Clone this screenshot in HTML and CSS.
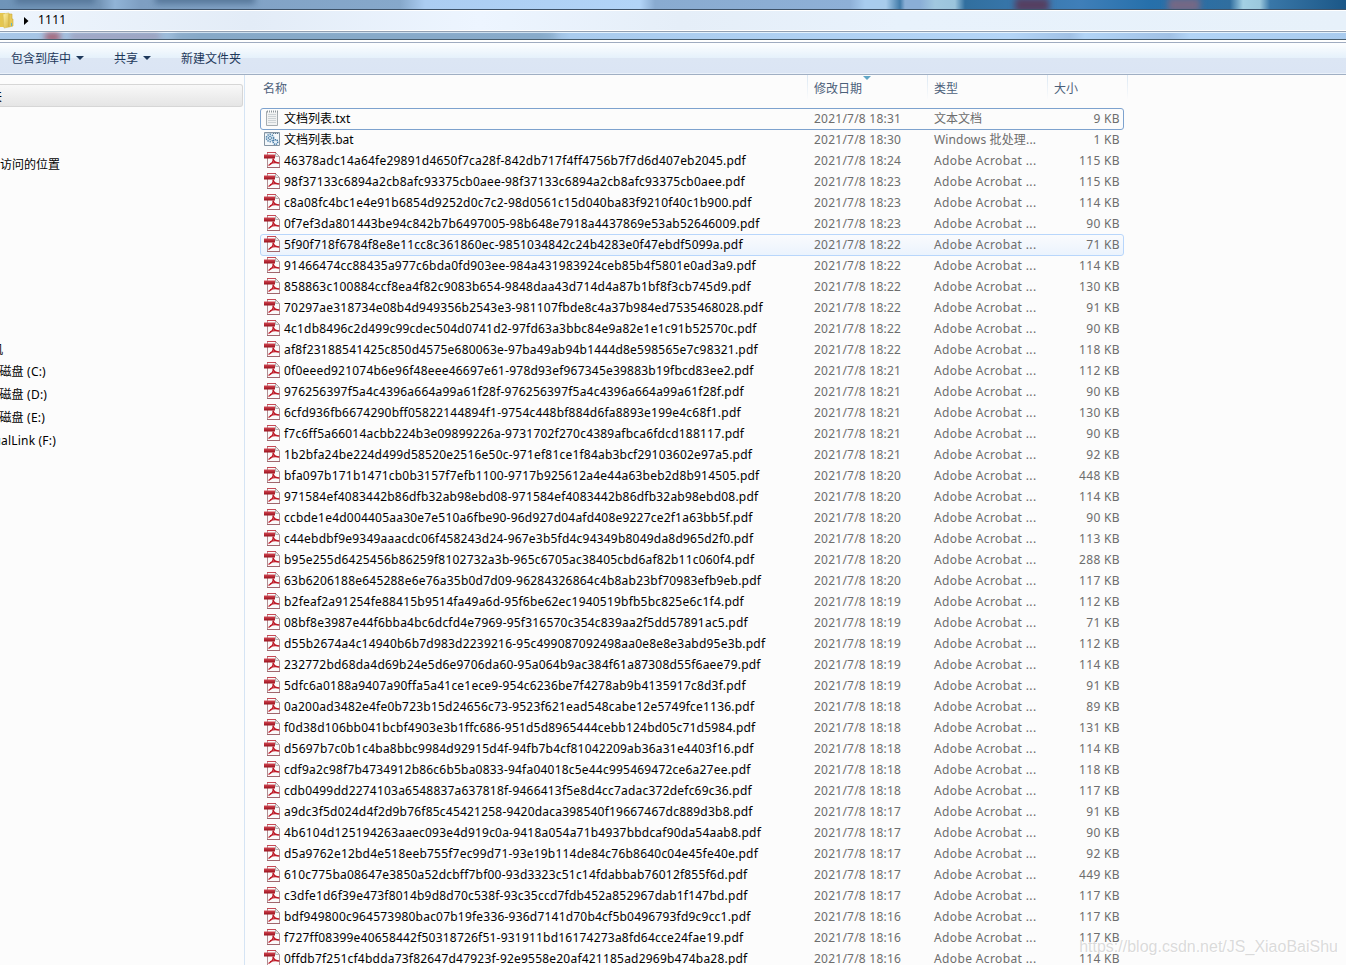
FILE: index.html
```
<!DOCTYPE html>
<html lang="zh-CN">
<head>
    <meta charset="UTF-8">
    <title>1111</title>
    <link rel="stylesheet" href="styles.css">
</head>
<body>
    <svg class="sprites" width="0" height="0">
        <defs>
            <linearGradient id="red" x1="0" y1="0" x2="0" y2="1">
                <stop offset="0" stop-color="#d34854"/>
                <stop offset="1" stop-color="#98101b"/>
            </linearGradient>
            <linearGradient id="gold" x1="0" y1="0" x2="1" y2="1">
                <stop offset="0" stop-color="#fff3a8"/>
                <stop offset="1" stop-color="#d8b640"/>
            </linearGradient>
        </defs>
        <symbol id="pdf" viewBox="0 0 16 16">
            <path d="M3.500 .5h8l4 4v11h-12z" fill="#fbfafa" stroke="#b08e92"/>
            <path d="M3 .5h9" stroke="#c44a55"/>
            <path d="M3 15.500h13" stroke="#a0666d"/>
            <path d="M11.500 1v3.500H15" fill="#e8e8e8" stroke="#b4b4b4"/>
            <path d="M0 2.500h11v4H0z" fill="url(#red)"/>
            <path d="M9 6.500c.8 2.500-.8 5-4.500 7M9.300 7.500c.6 2 2.200 3.300 6 3.500M6 11.800c2.500-1.200 5.500-1.500 9.300-.7" fill="none" stroke="#bd1825" stroke-width="1.400"/>
        </symbol>
        <symbol id="txt" viewBox="0 0 16 16">
            <path d="M2.500 1.500h11v14h-11z" fill="#f1f2f2" stroke="#a5acb0"/>
            <path d="M3 1.500h10" stroke="#fcfcfc" stroke-width="2"/>
            <path d="M3 1.500h11" stroke="#8e979b" stroke-width="2" stroke-dasharray="1 1"/>
            <path d="M4 4.500h8M4 6.500h8M4 8.500h8M4 10.500h8M4 12.500h8" stroke="#cdd3d6"/>
        </symbol>
        <symbol id="bat" viewBox="0 0 16 16">
            <path d="M.5 1.500h15v13H.5z" fill="#f3f7fa" stroke="#8494a2"/>
            <path d="M1 2.500h14" stroke="#c8d5df"/>
            <path d="M9 2.500h5" stroke="#5d7890" stroke-dasharray="1 1"/>
            <circle cx="6" cy="7" r="3.600" fill="#dceaf4" stroke="#5688af" stroke-width="1.600" stroke-dasharray="1.400 .9"/>
            <circle cx="6" cy="7" r="1.500" fill="#fff" stroke="#5688af"/>
            <circle cx="11.500" cy="11" r="2.300" fill="#e4eff7" stroke="#3f75a2" stroke-width="1.400" stroke-dasharray="1.200 .6"/>
        </symbol>
    </svg>

    <div class="window">
        <div class="glass glass-top">
            <span class="blur tab1"></span>
            <span class="blur tab2"></span>
            <span class="blur tab3"></span>
            <span class="blur tab4"></span>
        </div>
        <div class="address">
            <svg class="folder" width="14" height="17" viewBox="0 0 14 17">
                <path d="M0 1h5v14H0z" fill="#e4c650"/>
                <path d="M3 2l6-1v14l-5 1z" fill="url(#gold)" stroke="#d9bd57" stroke-width=".6"/>
                <path d="M9 2h3v5h1v7l-4 1z" fill="#e8ca58" stroke="#c9aa3c" stroke-width=".6"/>
                <path d="M11.500 11v3" stroke="#5cb6c5"/>
            </svg>
            <svg class="crumb" width="5" height="8" viewBox="0 0 5 8"><path d="M0 0l4.500 4L0 8z"/></svg>
            <span class="path">1111</span>
        </div>
        <div class="glass glass-bottom">
            <span class="blur url1"></span>
            <span class="blur url2"></span>
            <span class="blur url3"></span>
        </div>
        <div class="toolbar">
            <span class="tool">包含到库中<i class="caret"></i></span>
            <span class="tool">共享<i class="caret"></i></span>
            <span class="tool">新建文件夹</span>
        </div>
        <div class="main">
            <nav class="sidebar">
                <div class="group selected"><span class="label fav">收藏夹</span></div>
                <div class="item recent"><span class="label">最近访问的位置</span></div>
                <div class="item computer"><span class="label">计算机</span></div>
                <div class="item"><span class="label drive">本地磁盘 (C:)</span></div>
                <div class="item"><span class="label drive">本地磁盘 (D:)</span></div>
                <div class="item"><span class="label drive">本地磁盘 (E:)</span></div>
                <div class="item"><span class="label drive link">VirtualLink (F:)</span></div>
            </nav>
            <section class="files">
                <div class="head">
                    <span class="col">名称</span>
                    <span class="col sorted">修改日期</span>
                    <span class="col">类型</span>
                    <span class="col">大小</span>
                </div>
                <div class="list" id="list"></div>
            </section>
        </div>
    </div>
    <div class="watermark">https://blog.csdn.net/JS_XiaoBaiShu</div>

    <script>
    // name, time, size in KB
    const files = [
        ["文档列表.txt", "18:31", 9],
        ["文档列表.bat", "18:30", 1],
        ["46378adc14a64fe29891d4650f7ca28f-842db717f4ff4756b7f7d6d407eb2045.pdf", "18:24", 115],
        ["98f37133c6894a2cb8afc93375cb0aee-98f37133c6894a2cb8afc93375cb0aee.pdf", "18:23", 115],
        ["c8a08fc4bc1e4e91b6854d9252d0c7c2-98d0561c15d040ba83f9210f40c1b900.pdf", "18:23", 114],
        ["0f7ef3da801443be94c842b7b6497005-98b648e7918a4437869e53ab52646009.pdf", "18:23", 90],
        ["5f90f718f6784f8e8e11cc8c361860ec-9851034842c24b4283e0f47ebdf5099a.pdf", "18:22", 71],
        ["91466474cc88435a977c6bda0fd903ee-984a431983924ceb85b4f5801e0ad3a9.pdf", "18:22", 114],
        ["858863c100884ccf8ea4f82c9083b654-9848daa43d714d4a87b1bf8f3cb745d9.pdf", "18:22", 130],
        ["70297ae318734e08b4d949356b2543e3-981107fbde8c4a37b984ed7535468028.pdf", "18:22", 91],
        ["4c1db8496c2d499c99cdec504d0741d2-97fd63a3bbc84e9a82e1e1c91b52570c.pdf", "18:22", 90],
        ["af8f23188541425c850d4575e680063e-97ba49ab94b1444d8e598565e7c98321.pdf", "18:22", 118],
        ["0f0eeed921074b6e96f48eee46697e61-978d93ef967345e39883b19fbcd83ee2.pdf", "18:21", 112],
        ["976256397f5a4c4396a664a99a61f28f-976256397f5a4c4396a664a99a61f28f.pdf", "18:21", 90],
        ["6cfd936fb6674290bff05822144894f1-9754c448bf884d6fa8893e199e4c68f1.pdf", "18:21", 130],
        ["f7c6ff5a66014acbb224b3e09899226a-9731702f270c4389afbca6fdcd188117.pdf", "18:21", 90],
        ["1b2bfa24be224d499d58520e2516e50c-971ef81ce1f84ab3bcf29103602e97a5.pdf", "18:21", 92],
        ["bfa097b171b1471cb0b3157f7efb1100-9717b925612a4e44a63beb2d8b914505.pdf", "18:20", 448],
        ["971584ef4083442b86dfb32ab98ebd08-971584ef4083442b86dfb32ab98ebd08.pdf", "18:20", 114],
        ["ccbde1e4d004405aa30e7e510a6fbe90-96d927d04afd408e9227ce2f1a63bb5f.pdf", "18:20", 90],
        ["c44ebdbf9e9349aaacdc06f458243d24-967e3b5fd4c94349b8049da8d965d2f0.pdf", "18:20", 113],
        ["b95e255d6425456b86259f8102732a3b-965c6705ac38405cbd6af82b11c060f4.pdf", "18:20", 288],
        ["63b6206188e645288e6e76a35b0d7d09-96284326864c4b8ab23bf70983efb9eb.pdf", "18:20", 117],
        ["b2feaf2a91254fe88415b9514fa49a6d-95f6be62ec1940519bfb5bc825e6c1f4.pdf", "18:19", 112],
        ["08bf8e3987e44f6bba4bc6dcfd4e7969-95f316570c354c839aa2f5dd57891ac5.pdf", "18:19", 71],
        ["d55b2674a4c14940b6b7d983d2239216-95c499087092498aa0e8e8e3abd95e3b.pdf", "18:19", 112],
        ["232772bd68da4d69b24e5d6e9706da60-95a064b9ac384f61a87308d55f6aee79.pdf", "18:19", 114],
        ["5dfc6a0188a9407a90ffa5a41ce1ece9-954c6236be7f4278ab9b4135917c8d3f.pdf", "18:19", 91],
        ["0a200ad3482e4fe0b723b15d24656c73-9523f621ead548cabe12e5749fce1136.pdf", "18:18", 89],
        ["f0d38d106bb041bcbf4903e3b1ffc686-951d5d8965444cebb124bd05c71d5984.pdf", "18:18", 131],
        ["d5697b7c0b1c4ba8bbc9984d92915d4f-94fb7b4cf81042209ab36a31e4403f16.pdf", "18:18", 114],
        ["cdf9a2c98f7b4734912b86c6b5ba0833-94fa04018c5e44c995469472ce6a27ee.pdf", "18:18", 118],
        ["cdb0499dd2274103a6548837a637818f-9466413f5e8d4cc7adac372defc69c36.pdf", "18:18", 117],
        ["a9dc3f5d024d4f2d9b76f85c45421258-9420daca398540f19667467dc889d3b8.pdf", "18:17", 91],
        ["4b6104d125194263aaec093e4d919c0a-9418a054a71b4937bbdcaf90da54aab8.pdf", "18:17", 90],
        ["d5a9762e12bd4e518eeb755f7ec99d71-93e19b114de84c76b8640c04e45fe40e.pdf", "18:17", 92],
        ["610c775ba08647e3850a52dcbff7bf00-93d3323c51c14fdabbab76012f855f6d.pdf", "18:17", 449],
        ["c3dfe1d6f39e473f8014b9d8d70c538f-93c35ccd7fdb452a852967dab1f147bd.pdf", "18:17", 117],
        ["bdf949800c964573980bac07b19fe336-936d7141d70b4cf5b0496793fd9c9cc1.pdf", "18:16", 117],
        ["f727ff08399e40658442f50318726f51-931911bd16174273a8fd64cce24fae19.pdf", "18:16", 117],
        ["0ffdb7f251cf4bdda73f82647d47923f-92e9558e20af421185ad2969b474ba28.pdf", "18:16", 114]
    ];

    const types = { txt: "文本文档", bat: "Windows 批处理...", pdf: "Adobe Acrobat ..." };
    const states = { 0: " focused", 6: " hovered" };

    document.getElementById("list").innerHTML = files.map(([name, time, size], i) => {
        const ext = name.split(".").pop();
        return `<div class="row ${ext}${states[i] || ""}">
            <svg class="icon" width="16" height="16"><use href="#${ext}"/></svg>
            <span class="name">${name}</span>
            <span class="date">2021/7/8 ${time}</span>
            <span class="type">${types[ext]}</span>
            <span class="size">${size} KB</span>
        </div>`;
    }).join("");
    </script>
</body>
</html>
```
FILE: styles.css
```
* {
    box-sizing: border-box;
}

body {
    margin: 0;
    height: 965px;
    overflow: hidden;
    position: relative;
    background: #fcfcfc;
    color: #000;
    font-family: "Noto Sans", "Noto Sans CJK SC", sans-serif;
    font-size: 12px;
    line-height: 20px;
    white-space: nowrap;
}

.sprites {
    position: absolute;
}

.window {
    display: flex;
    flex-direction: column;
    height: 965px;
}

/* blurred desktop seen through the window frame */
.glass {
    position: relative;
    overflow: hidden;
    flex: none;
}

.glass-top {
    height: 10px;
    border-bottom: 1px solid #3e5268;
    background: linear-gradient(90deg, #6f94b8 0, #7596b8 100px, #91b4d7 115px, #7e9fc2 140px, #86a8cb 400px, #abcdf2 425px, #b2d4f7 640px, #89abd0 655px, #8eb0d7 850px, #a8ccef 865px, #a8ccec 886px, #417ba9 900px, #8aaed6 905px, #8aaed6 920px, #a1c8df 935px, #9bc4dc 955px, #316f9f 965px, #3f7fb9 1080px, #2670ab 1150px, #306e9f 1230px, #a3d0e4 1243px, #9bc8dd 1260px, #3977a8 1270px, #1b5787 1346px);
}

.glass-bottom {
    height: 9px;
    border-top: 1px solid #929fb0;
    border-bottom: 1px solid #485d6d;
    background: linear-gradient(90deg, #a9c8e8 0, #9fbedc 160px, #8fb1cf 200px, #91b4d3 540px, #a9cbed 570px, #b4d5f7 1010px, #a1c1e5 1070px, #b2d4f6 1085px, #a1c1e5 1170px, #b2d4f6 1190px, #a9cbee 1346px);
    box-shadow: inset 0 1px #e5f2fc;
}

.blur {
    position: absolute;
    filter: blur(3px);
    background: #56779a;
}

.tab1 {
    left: 15px;
    top: -6px;
    width: 80px;
    height: 10px;
}

.tab2 {
    left: 155px;
    top: -6px;
    width: 100px;
    height: 10px;
}

.tab3 {
    left: 1015px;
    top: -2px;
    width: 34px;
    height: 14px;
    background: #563e60;
}

.tab4 {
    left: 1168px;
    top: -2px;
    width: 32px;
    height: 14px;
    background: #756885;
}

.url1 {
    left: 45px;
    top: 1px;
    width: 15px;
    height: 8px;
    background: #a65a6b;
}

.url2 {
    left: 70px;
    top: 3px;
    width: 90px;
    height: 3px;
    background: #9b7893;
}

.url3 {
    left: 175px;
    top: 3px;
    width: 380px;
    height: 3px;
    background: #7899b9;
}

.address {
    flex: none;
    display: flex;
    align-items: center;
    height: 21px;
    border: solid #fff;
    border-width: 1px 0;
    background: linear-gradient(90deg, #eef5fd, #e3ecf7 250px, #edf5ff 480px, #e5eef8 680px, #e8f2fc 900px, #e7f1fa);
}

.folder {
    flex: none;
}

.crumb {
    margin: 0 9px 0 10px;
}

.path {
    margin-top: -2px;
    letter-spacing: .2px;
}

.toolbar {
    flex: none;
    display: flex;
    align-items: center;
    height: 35px;
    padding: 4px 0 0 11px;
    gap: 30px;
    border-bottom: 1px solid #a0afc3;
    color: #1e395b;
    background: linear-gradient(#fff 0, #fff 2px, #9fabc0 2px, #9fabc0 3px, #fdfeff 3px, #e5f1fb 18px, #dce6f4 18px, #dbe5f4 33px, #eaf1fa 33px);
}

.tool {
    display: flex;
    align-items: center;
}

.caret {
    margin: -2px 0 0 5px;
    border: 4px solid transparent;
    border-top-color: #1e395b;
    border-bottom: 0;
}

.main {
    flex: 1;
    display: flex;
    min-height: 0;
}

.sidebar {
    width: 245px;
    flex: none;
    border-right: 1px solid #d5e4f4;
    padding-top: 9px;
    overflow: hidden;
}

.group {
    height: 23px;
    width: 243px;
    border: 1px solid #d6d6d6;
    border-left: 0;
    border-radius: 0 3px 3px 0;
    background: linear-gradient(#f8f8f8, #e5e5e5);
}

.item {
    height: 23px;
}

.label {
    display: block;
    line-height: 23px;
    margin-left: -24px;
}

.fav {
    margin-left: -34px;
}

.recent {
    margin: 46px 0 161px;
}

.computer .label {
    margin-left: -33px;
    line-height: 25px;
}

.drive {
    letter-spacing: .2px;
    margin-left: -25px;
}

.link {
    margin-left: -27px;
}

.files {
    flex: none;
    width: 883px;
    padding-left: 15px;
}

.head,
.row {
    display: grid;
    grid-template-columns: 547px 120px 120px 1fr;
}

.head {
    height: 33px;
    width: 868px;
    color: #4c607a;
}

.col {
    position: relative;
    height: 24px;
    padding-left: 6px;
    line-height: 27px;
    border-right: 1px solid;
    border-image: linear-gradient(#d9e6f2, #fcfcfc) 1;
}

.col:first-child {
    width: 548px;
    padding-left: 3px;
}

.col + .col {
    margin-left: 1px;
    margin-right: -1px;
}

.col:last-child {
    margin-right: 0;
}

.sorted::after {
    content: "";
    position: absolute;
    top: 1px;
    left: 55px;
    border: 4px solid transparent;
    border-top-color: #60a6c6;
    border-bottom: 0;
}

.row {
    grid-template-columns: 20px 530px 120px 120px 1fr;
    align-items: center;
    width: 864px;
    height: 22px;
    margin-bottom: -1px;
    padding: 0 3px;
    border: 1px solid transparent;
    border-radius: 3px;
    color: #6d6d6d;
}

.focused {
    border-color: #7da2ce;
}

.hovered {
    border-color: #b8d6fb;
    background: linear-gradient(#fafbfd, #ebf3fd);
}

.icon {
    margin-top: -2px;
}

.name {
    color: #000;
}

.pdf .name {
    letter-spacing: .21px;
}

.date {
    letter-spacing: .23px;
}

.pdf .type {
    letter-spacing: .37px;
}

.bat .type {
    letter-spacing: .15px;
}

.size {
    text-align: right;
    letter-spacing: .35px;
}

.watermark {
    position: absolute;
    right: 8px;
    bottom: 8px;
    color: rgba(170, 170, 170, .42);
    font: 16px/20px "Liberation Sans", sans-serif;
    text-shadow: 1px 1px #fff;
}
```
